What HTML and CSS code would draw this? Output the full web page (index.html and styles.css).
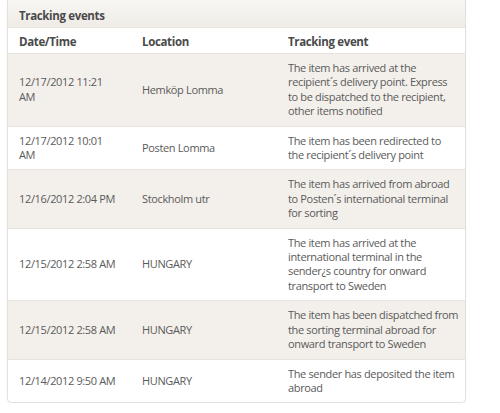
FILE: index.html
```html
<!DOCTYPE html>
<html>
<head>
<meta charset="utf-8">
<link rel="stylesheet" href="styles.css">
</head>
<body>
<div class="panel">
  <div class="panel-title">Tracking events</div>
  <table class="events">
    <colgroup><col class="c-date"><col class="c-loc"><col class="c-evt"></colgroup>
    <thead>
      <tr><th>Date/Time</th><th>Location</th><th>Tracking event</th></tr>
    </thead>
    <tbody>
      <tr class="alt"><td>12/17/2012 11:21 AM</td><td>Hemköp Lomma</td><td>The item has arrived at the recipient´s delivery point. Express to&nbsp;be dispatched to the recipient, other items notified</td></tr>
      <tr><td>12/17/2012 10:01 AM</td><td>Posten Lomma</td><td>The item has been redirected to the&nbsp;recipient´s delivery point</td></tr>
      <tr class="alt"><td>12/16/2012 2:04 PM</td><td>Stockholm utr</td><td>The item has arrived from abroad to Posten´s international terminal for sorting</td></tr>
      <tr><td>12/15/2012 2:58 AM</td><td>HUNGARY</td><td>The item has arrived at the international terminal in the sender¿s country for onward transport to Sweden</td></tr>
      <tr class="alt"><td>12/15/2012 2:58 AM</td><td>HUNGARY</td><td>The item has been dispatched from the sorting terminal abroad for onward transport to Sweden</td></tr>
      <tr><td>12/14/2012 9:50 AM</td><td>HUNGARY</td><td>The sender has deposited the item abroad</td></tr>
    </tbody>
  </table>
</div>
</body>
</html>
```
FILE: styles.css
```css
html, body { margin: 0; padding: 0; background: #ffffff; }
body {
  font-family: "Open Sans", "Segoe UI", sans-serif;
  font-size: 11px;
  letter-spacing: -0.35px;
  color: #5a5a5a;
  padding: 0 0 0 7px;
}
.panel {
  width: 457px;
  border: 1px solid #e3e0da;
  border-top: none;
  border-radius: 0 0 5px 5px;
  overflow: hidden;
  box-shadow: 0 1px 2px rgba(0,0,0,0.06);
}
.panel-title {
  height: 27px;
  line-height: 32px;
  padding-left: 11px;
  background: linear-gradient(#f7f6f3, #efece6);
  font-weight: 700;
  font-size: 11.5px;
  color: #4a4a4a;
  border-bottom: 1px solid #e8e5df;
}
.events {
  width: 100%;
  border-collapse: collapse;
  table-layout: fixed;
}
.c-date { width: 123px; }
.c-loc { width: 146px; }
.events th {
  text-align: left;
  font-weight: 700;
  font-size: 11.5px;
  color: #4a4a4a;
  height: 24px;
  padding: 1px 0 0 11px;
  border-bottom: 1px solid #e6e3dc;
  background: #fff;
}
.events th:first-child, .events td:first-child { padding-left: 11px; }
.events td {
  padding: 7px 8px 7px 11px;
  line-height: 14.4px;
  vertical-align: middle;
  border-bottom: 1px solid #e6e3dc;
}
.events td:first-child { padding-right: 13px; }
.events td:last-child { padding-right: 5px; }
.events tr:last-child td { border-bottom: none; }
.events tr.alt td { background: #f3f0eb; }
```
